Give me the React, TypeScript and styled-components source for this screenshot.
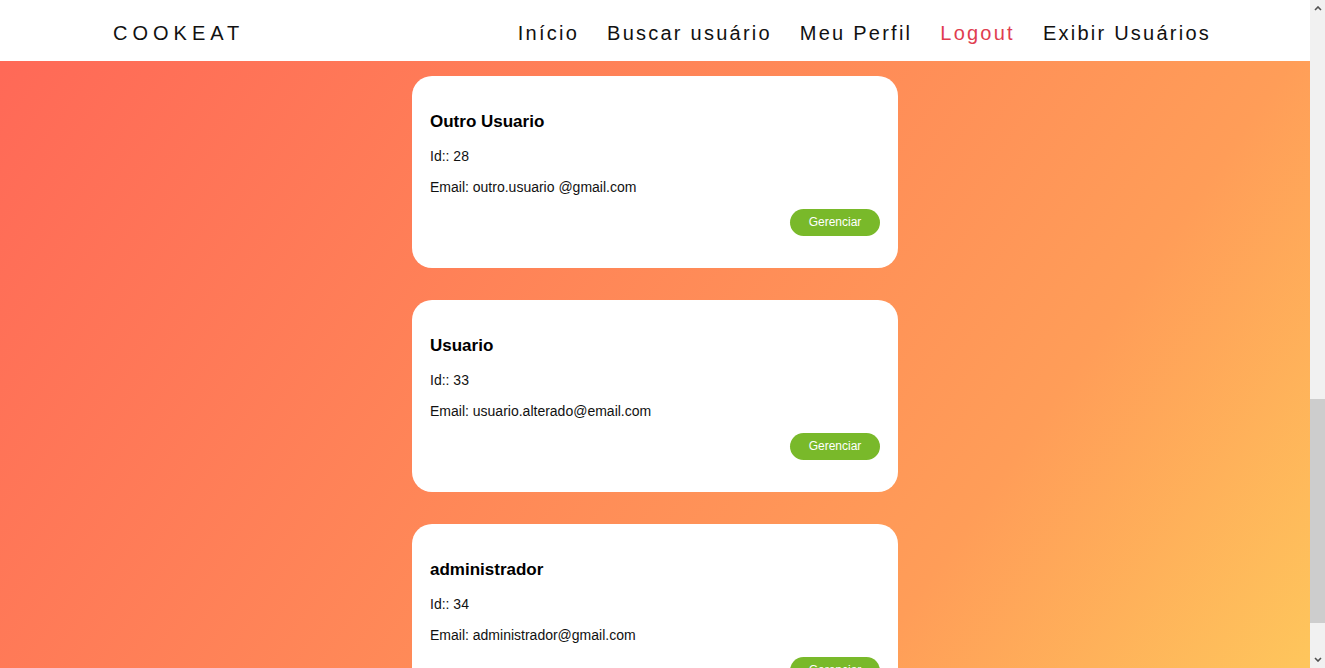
import React, { useLayoutEffect, useRef } from "react";
import styled, { createGlobalStyle } from "styled-components";

type User = { id: number; nome: string; email: string };

const users: User[] = [
  { id: 1, nome: "Maria Souza", email: "maria.souza@gmail.com" },
  { id: 7, nome: "João Pereira", email: "joao.pereira@gmail.com" },
  { id: 12, nome: "Ana Lima", email: "ana.lima@email.com" },
  { id: 19, nome: "Carlos Mendes", email: "carlos.mendes@gmail.com" },
  { id: 25, nome: "Teste", email: "teste@email.com" },
  { id: 28, nome: "Outro Usuario", email: "outro.usuario @gmail.com" },
  { id: 33, nome: "Usuario", email: "usuario.alterado@email.com" },
  { id: 34, nome: "administrador", email: "administrador@gmail.com" },
];

const navLinks: Array<{ label: string; danger?: boolean }> = [
  { label: "Início" },
  { label: "Buscar usuário" },
  { label: "Meu Perfil" },
  { label: "Logout", danger: true },
  { label: "Exibir Usuários" },
];

// where the list is scrolled to in the screenshot
const SCROLL_TOP = 1139;

const GlobalStyle = createGlobalStyle`
  html, body {
    margin: 0;
    padding: 0;
    height: 100%;
    overflow: hidden;
  }

  body {
    font-family: "Liberation Sans", Arial, sans-serif;
  }
`;

const Shell = styled.div`
  display: flex;
  height: 100vh;
  width: 100%;
`;

const Pane = styled.div`
  flex: 1;
  min-width: 0;
  overflow-y: auto;
  background: linear-gradient(125deg, #ff6757 0%, #ff9d58 75%, #fec65c 100%);
  scrollbar-width: none;

  &::-webkit-scrollbar {
    display: none;
  }
`;

const NavBar = styled.header`
  position: sticky;
  top: 0;
  z-index: 10;
  height: 61px;
  display: flex;
  align-items: center;
  justify-content: space-between;
  padding: 5px 99px 0 113px;
  box-sizing: border-box;
  background: #ffffff;
`;

const Brand = styled.span`
  font-size: 20px;
  letter-spacing: 5px;
  color: #111111;
`;

const NavList = styled.nav`
  display: flex;
  align-items: center;
  gap: 28px;
`;

const NavLink = styled.a<{ $danger?: boolean }>`
  font-size: 20px;
  letter-spacing: 2.24px;
  color: ${({ $danger }) => ($danger ? "#e03d4f" : "#111111")};
  text-decoration: none;
  cursor: pointer;
`;

const Main = styled.main`
  display: flex;
  flex-direction: column;
  align-items: center;
  gap: 32px;
  padding: 34px 0 36px;
`;

const Card = styled.article`
  width: 486px;
  box-sizing: border-box;
  padding: 36px 18px 32px;
  border-radius: 20px;
  background: #ffffff;
  display: flex;
  flex-direction: column;
`;

const Name = styled.h3`
  margin: 0 0 16px;
  font-size: 17px;
  line-height: 20px;
  font-weight: 700;
  color: #000000;
`;

const Field = styled.p`
  margin: 0 0 15px;
  font-size: 14px;
  line-height: 16px;
  color: #111111;

  &:last-of-type {
    margin-bottom: 14px;
  }
`;

const Actions = styled.div`
  display: flex;
  justify-content: flex-end;
`;

const ManageButton = styled.button`
  width: 90px;
  height: 27px;
  padding: 0 0 1px;
  border: 0;
  border-radius: 14px;
  background: #79b92a;
  color: #ffffff;
  font-family: "Liberation Sans", Arial, sans-serif;
  font-size: 12px;
  cursor: pointer;
`;

const ScrollTrack = styled.div`
  width: 15px;
  flex: none;
  display: flex;
  flex-direction: column;
  background: #f1f1f1;
`;

const ScrollArrow = styled.div`
  height: 17px;
  flex: none;
  display: flex;
  align-items: center;
  justify-content: center;
  color: #505050;
`;

const ScrollGap = styled.div<{ $size: number }>`
  flex: none;
  height: ${({ $size }) => $size}px;
`;

const ScrollThumb = styled.div<{ $size: number }>`
  flex: none;
  height: ${({ $size }) => $size}px;
  background: #cdcdcd;
`;

const Chevron: React.FC<{ down?: boolean }> = ({ down }) => (
  <svg width="8" height="5" viewBox="0 0 8 5" fill="none">
    <path
      d={down ? "M1 1 L4 4 L7 1" : "M1 4 L4 1 L7 4"}
      stroke="currentColor"
      strokeWidth="1.6"
    />
  </svg>
);

const App: React.FC = () => {
  const paneRef = useRef<HTMLDivElement>(null);

  useLayoutEffect(() => {
    if (paneRef.current) paneRef.current.scrollTop = SCROLL_TOP;
  }, []);

  return (
    <>
      <GlobalStyle />
      <Shell>
        <Pane ref={paneRef}>
          <NavBar>
            <Brand>COOKEAT</Brand>
            <NavList>
              {navLinks.map((link) => (
                <NavLink key={link.label} $danger={link.danger}>
                  {link.label}
                </NavLink>
              ))}
            </NavList>
          </NavBar>
          <Main>
            {users.map((user) => (
              <Card key={user.id}>
                <Name>{user.nome}</Name>
                <Field>Id:: {user.id}</Field>
                <Field>Email: {user.email}</Field>
                <Actions>
                  <ManageButton type="button">Gerenciar</ManageButton>
                </Actions>
              </Card>
            ))}
          </Main>
        </Pane>
        <ScrollTrack>
          <ScrollArrow>
            <Chevron />
          </ScrollArrow>
          <ScrollGap $size={382} />
          <ScrollThumb $size={224} />
          <ScrollGap $size={28} />
          <ScrollArrow>
            <Chevron down />
          </ScrollArrow>
        </ScrollTrack>
      </Shell>
    </>
  );
};

export default App;
